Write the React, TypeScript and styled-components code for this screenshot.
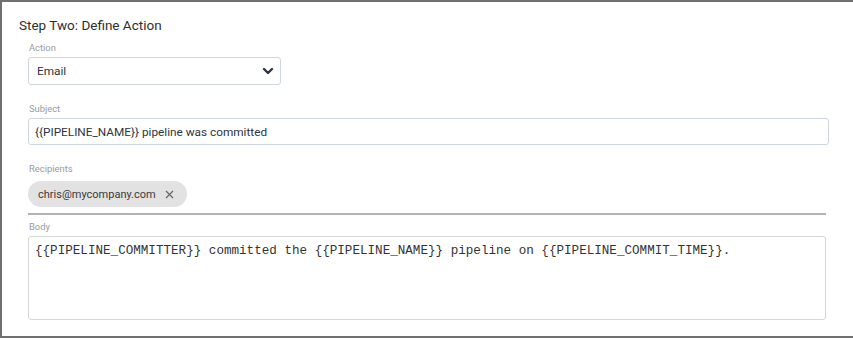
import { createGlobalStyle } from "styled-components";
import styled from "styled-components";

const GlobalStyle = createGlobalStyle`
  html, body {
    margin: 0;
    padding: 0;
    background: #ffffff;
  }
  body {
    font-family: Roboto, "Liberation Sans", Arial, sans-serif;
    color: #333;
  }
`;

const Panel = styled.section`
  box-sizing: border-box;
  width: 853px;
  height: 338px;
  border-top: 2px solid #707070;
  border-left: 2px solid #707070;
  border-bottom: 2px solid #707070;
  padding: 14px 0 0 17px;
`;

const Title = styled.h2`
  margin: 0 0 8px;
  font-size: 13.5px;
  font-weight: 400;
  line-height: 18px;
  color: #2e2e2e;
`;

const Fields = styled.div`
  display: flex;
  flex-direction: column;
  padding-left: 9px;
  width: 800px;
`;

const Field = styled.div<{ $space: number }>`
  display: flex;
  flex-direction: column;
  margin-top: ${(p) => p.$space}px;
`;

const Label = styled.label`
  font-size: 9.4px;
  line-height: 12px;
  color: #9a9a9a;
  margin: 0 0 3px 1px;
`;

const SelectBox = styled.div`
  box-sizing: border-box;
  width: 253px;
  height: 28px;
  border: 1px solid #cfd6de;
  border-radius: 3px;
  display: flex;
  align-items: center;
  justify-content: space-between;
  padding: 0 6px 0 8px;
  font-size: 11.8px;
  color: #2d3440;
`;

const TextInput = styled.div`
  box-sizing: border-box;
  width: 801px;
  height: 27px;
  border: 1px solid #cfd6de;
  border-radius: 3px;
  display: flex;
  align-items: center;
  padding: 0 6px;
  font-size: 11.8px;
  color: #2d3440;
`;

const ChipRow = styled.div`
  display: flex;
  gap: 6px;
  padding: 3px 0 6px;
  border-bottom: 2px solid #b3b3b3;
  width: 798px;
`;

const Chip = styled.span`
  display: inline-flex;
  align-items: center;
  gap: 9px;
  height: 26px;
  padding: 0 13px 0 10px;
  border-radius: 13px;
  background: #e2e2e2;
  font-size: 11px;
  color: #3a3a3a;
`;

const BodyArea = styled.div`
  box-sizing: border-box;
  width: 798px;
  height: 84px;
  border: 1px solid #d6d6d6;
  border-radius: 3px;
  padding: 6px 6px;
  font-family: "Liberation Mono", "Courier New", monospace;
  font-size: 12.6px;
  line-height: 16px;
  color: #333;
  white-space: pre;
`;

const Chevron = () => (
  <svg width="12" height="12" viewBox="0 0 12 12" aria-hidden>
    <path
      d="M2 4 L6 8 L10 4"
      fill="none"
      stroke="#2d3440"
      strokeWidth="2.4"
      strokeLinecap="round"
      strokeLinejoin="round"
    />
  </svg>
);

const Cross = () => (
  <svg width="9" height="9" viewBox="0 0 9 9" aria-hidden>
    <path d="M1 1 L8 8 M8 1 L1 8" stroke="#666" strokeWidth="1.2" />
  </svg>
);

export default function App() {
  return (
    <>
      <GlobalStyle />
      <Panel>
        <Title>Step Two: Define Action</Title>
        <Fields>
          <Field $space={0}>
            <Label>Action</Label>
            <SelectBox>
              <span>Email</span>
              <Chevron />
            </SelectBox>
          </Field>
          <Field $space={18}>
            <Label>Subject</Label>
            <TextInput>{"{{PIPELINE_NAME}} pipeline was committed"}</TextInput>
          </Field>
          <Field $space={18}>
            <Label>Recipients</Label>
            <ChipRow>
              <Chip>
                chris@mycompany.com
                <Cross />
              </Chip>
            </ChipRow>
          </Field>
          <Field $space={6}>
            <Label>Body</Label>
            <BodyArea>
              {"{{PIPELINE_COMMITTER}} committed the {{PIPELINE_NAME}} pipeline on {{PIPELINE_COMMIT_TIME}}."}
            </BodyArea>
          </Field>
        </Fields>
      </Panel>
    </>
  );
}
